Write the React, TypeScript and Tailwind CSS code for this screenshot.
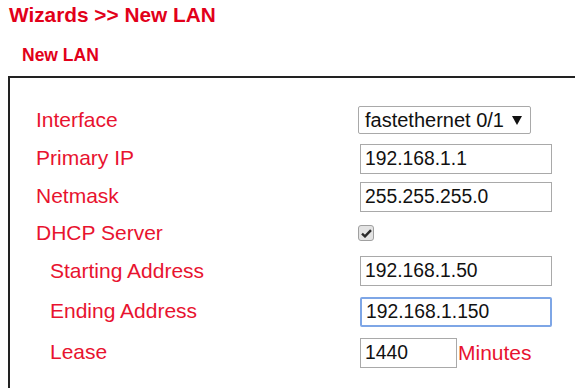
import React from "react"

const font = { fontFamily: '"Liberation Sans", Arial, sans-serif' }

type Row = {
  label: string
  indent?: boolean
  h: string
  control: React.ReactNode
}

function TextBox({ value, w = "w-[192px]", focused = false }: { value: string; w?: string; focused?: boolean }) {
  return (
    <input
      readOnly
      value={value}
      style={font}
      className={`${w} h-[30px] ml-[2px] bg-white px-[4px] text-[19.3px] text-[#111] outline-none ${
        focused
          ? "border-2 border-[#7ea6e6] rounded-[2px] px-[3px]"
          : "border border-[#a9a9a9]"
      }`}
    />
  )
}

function Select() {
  return (
    <div className="flex h-[28px] w-[173px] items-center justify-between rounded-[2px] border border-[#a9a9a9] bg-white pl-[6px] pr-[8px] text-[20px] text-[#111]">
      <span>fastethernet 0/1</span>
      <svg width="10" height="9" viewBox="0 0 10 9">
        <path d="M0 0 L10 0 L5 9 Z" fill="#111" />
      </svg>
    </div>
  )
}

function Checkbox() {
  return (
    <div className="flex h-[16px] w-[16px] items-center justify-center rounded-[3px] border border-[#a0a0a0] bg-[#e3e3e3]">
      <svg width="11" height="9" viewBox="0 0 11 9">
        <path d="M1 4.6 L4 7.4 L10 1.2" fill="none" stroke="#2a2a2a" strokeWidth="2.4" />
      </svg>
    </div>
  )
}

const rows: Row[] = [
  { label: "Interface", h: "h-[38px]", control: <Select /> },
  { label: "Primary IP", h: "h-[39px]", control: <TextBox value="192.168.1.1" /> },
  { label: "Netmask", h: "h-[37px]", control: <TextBox value="255.255.255.0" /> },
  { label: "DHCP Server", h: "h-[36px]", control: <Checkbox /> },
  { label: "Starting Address", indent: true, h: "h-[40px]", control: <TextBox value="192.168.1.50" /> },
  { label: "Ending Address", indent: true, h: "h-[41px]", control: <TextBox value="192.168.1.150" focused /> },
  {
    label: "Lease",
    indent: true,
    h: "h-[41px]",
    control: (
      <div className="flex items-center">
        <TextBox value="1440" w="w-[97px]" />
        <span className="ml-[1px] text-[21px] text-[#e8132f]">Minutes</span>
      </div>
    ),
  },
]

export default function App() {
  return (
    <div style={font} className="h-[388px] w-[575px] overflow-hidden bg-white">
      <div className="mt-[4px] h-[21px] pl-[9px] text-[20.8px] font-bold leading-[21px] text-[#e2001a]">
        Wizards &gt;&gt; New LAN
      </div>
      <div className="mt-[22px] h-[18px] pl-[22px] text-[17.5px] font-bold leading-[17.5px] text-[#e2001a]">
        New LAN
      </div>

      {/* Form frame, runs off the right and bottom edges */}
      <div className="ml-[8px] mt-[11px] h-[340px] w-[620px] border-2 border-[#222] pt-[23px] pl-[26px]">
        {rows.map((r) => (
          <div key={r.label} className={`flex items-center ${r.h}`}>
            <div
              className={`w-[322px] -mt-[2px] text-[21px] leading-none text-[#e8132f] ${r.indent ? "pl-[14px]" : ""}`}
            >
              {r.label}
            </div>
            {r.control}
          </div>
        ))}
      </div>
    </div>
  )
}
